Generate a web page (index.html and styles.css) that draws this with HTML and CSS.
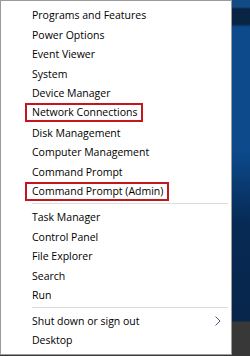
FILE: index.html
```html
<!DOCTYPE html>
<html lang="en">
<head>
    <meta charset="UTF-8">
    <title>Quick Link Menu</title>
    <link rel="stylesheet" href="styles.css">
</head>
<body>
    <div class="menu">
        <div class="group">
            <div class="item">Programs and Features</div>
            <div class="item">Power Options</div>
            <div class="item">Event Viewer</div>
            <div class="item">System</div>
            <div class="item">Device Manager</div>
            <div class="item"><span class="mark">Network Connections</span></div>
            <div class="item">Disk Management</div>
            <div class="item">Computer Management</div>
            <div class="item">Command Prompt</div>
            <div class="item"><span class="mark">Command Prompt (Admin)</span></div>
        </div>
        <div class="sep"></div>
        <div class="group">
            <div class="item">Task Manager</div>
            <div class="item">Control Panel</div>
            <div class="item">File Explorer</div>
            <div class="item">Search</div>
            <div class="item">Run</div>
        </div>
        <div class="sep"></div>
        <div class="group">
            <div class="item">Shut down or sign out
                <svg class="arrow" width="6" height="10" viewBox="0 0 6 10"><path d="M0.5 0.5 L5 5 L0.5 9.5" fill="none" stroke="#54507a" stroke-width="1"/></svg>
            </div>
            <div class="item">Desktop</div>
        </div>
    </div>
</body>
</html>
```

FILE: styles.css
```css
body {
    margin: 0;
    width: 250px;
    height: 356px;
    overflow: hidden;
    font-family: "Segoe UI", "Open Sans", sans-serif;
    font-size: 10.5px;
    color: #000;
    background: linear-gradient(to bottom,
        #124a86 0px, #124a86 7px,
        #0a2443 9px, #0a2443 24px,
        #0c4a8c 27px, #0c4a8c 150px,
        #072b56 220px, #08254a 321px,
        #383838 322px, #383838 356px);
}
.menu {
    box-sizing: border-box;
    width: 232px;
    height: 355px;
    background: #fff;
    border: 1px solid #9a9a9a;
    padding-top: 4.2px;
}
.item {
    display: flex;
    align-items: center;
    height: 19.6px;
    padding-left: 31px;
    padding-right: 10px;
    white-space: nowrap;
}
.mark {
    display: inline-block;
    box-sizing: border-box;
    height: 19px;
    line-height: 15px;
    margin-left: -7px;
    padding: 0 4px 0 5px;
    border: 2px solid #c4161c;
}
.sep {
    height: 1px;
    background: #dcdcdc;
    margin: 2px 3px 3px 31px;
}
.arrow {
    margin-left: auto;
    margin-right: 0;
}
```
